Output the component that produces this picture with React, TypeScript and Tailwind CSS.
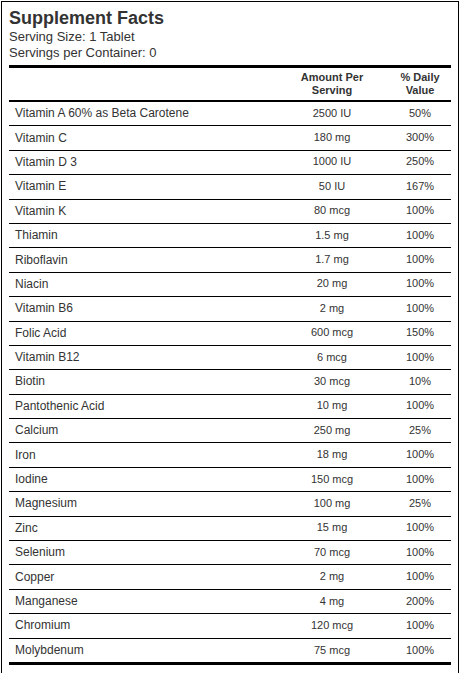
import React from "react";

const rows: [string, string, string][] = [
  ["Vitamin A 60% as Beta Carotene", "2500 IU", "50%"],
  ["Vitamin C", "180 mg", "300%"],
  ["Vitamin D 3", "1000 IU", "250%"],
  ["Vitamin E", "50 IU", "167%"],
  ["Vitamin K", "80 mcg", "100%"],
  ["Thiamin", "1.5 mg", "100%"],
  ["Riboflavin", "1.7 mg", "100%"],
  ["Niacin", "20 mg", "100%"],
  ["Vitamin B6", "2 mg", "100%"],
  ["Folic Acid", "600 mcg", "150%"],
  ["Vitamin B12", "6 mcg", "100%"],
  ["Biotin", "30 mcg", "10%"],
  ["Pantothenic Acid", "10 mg", "100%"],
  ["Calcium", "250 mg", "25%"],
  ["Iron", "18 mg", "100%"],
  ["Iodine", "150 mcg", "100%"],
  ["Magnesium", "100 mg", "25%"],
  ["Zinc", "15 mg", "100%"],
  ["Selenium", "70 mcg", "100%"],
  ["Copper", "2 mg", "100%"],
  ["Manganese", "4 mg", "200%"],
  ["Chromium", "120 mcg", "100%"],
  ["Molybdenum", "75 mcg", "100%"],
];

export default function App() {
  return (
    <div
      className="m-[1px] w-[458px] border border-black bg-white px-[7px] pt-[6px] pb-[10px] text-[#333]"
      style={{ fontFamily: '"Liberation Sans", Arial, sans-serif' }}
    >
      <div className="text-[18px] font-bold leading-[21px]">Supplement Facts</div>
      <div className="text-[13px] leading-[16px]">Serving Size: 1 Tablet</div>
      <div className="text-[13px] leading-[16px]">Servings per Container: 0</div>
      <div className="mt-[4px] border-t-[3px] border-black">
        <div className="flex border-b-2 border-black pt-[3px] pb-[3px] text-[11px] font-bold leading-[13px]">
          <div className="w-[265px]" />
          <div className="w-[116px] text-center">
            Amount Per
            <br />
            Serving
          </div>
          <div className="w-[60px] text-center">
            % Daily
            <br />
            Value
          </div>
        </div>
        {rows.map(([name, amt, dv], i) => (
          <div
            key={name}
            className={
              i === rows.length - 1
                ? "box-border flex h-[26.4px] items-center border-b-[3px] border-black"
                : "box-border flex h-[24.4px] items-center border-b border-black pb-[1px]"
            }
          >
            <div className="w-[265px] pl-[6px] text-[12px] leading-[14px]">{name}</div>
            <div className="w-[116px] text-center text-[11px] leading-[13px]">{amt}</div>
            <div className="w-[60px] text-center text-[11px] leading-[13px]">{dv}</div>
          </div>
        ))}
      </div>
    </div>
  );
}
